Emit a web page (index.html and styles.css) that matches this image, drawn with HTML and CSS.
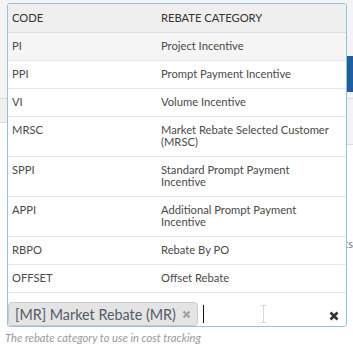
FILE: index.html
```html
<!DOCTYPE html>
<html lang="en">
<head>
    <meta charset="UTF-8">
    <title>Rebate category</title>
    <link rel="stylesheet" href="styles.css">
</head>
<body>
<div class="page">
  <div class="toolbar">
    <span class="action_btn"></span>
  </div>
  <div class="grid_head">
    <div class="gh_left"></div>
    <div class="gh_right"></div>
  </div>
  <p class="page_hint">Rebates and costs</p>
</div>

<div class="field">
  <div class="select_box">
    <div class="results">
      <table class="results_table">
        <thead>
          <tr><th class="col_code">CODE</th><th>REBATE CATEGORY</th></tr>
        </thead>
        <tbody>
          <tr class="highlight"><td>PI</td><td><span class="cat">Project Incentive</span></td></tr>
          <tr><td>PPI</td><td><span class="cat">Prompt Payment Incentive</span></td></tr>
          <tr><td>VI</td><td><span class="cat">Volume Incentive</span></td></tr>
          <tr><td>MRSC</td><td><span class="cat">Market Rebate Selected Customer (MRSC)</span></td></tr>
          <tr><td>SPPI</td><td><span class="cat">Standard Prompt Payment Incentive</span></td></tr>
          <tr><td>APPI</td><td><span class="cat">Additional Prompt Payment Incentive</span></td></tr>
          <tr><td>RBPO</td><td><span class="cat">Rebate By PO</span></td></tr>
          <tr><td>OFFSET</td><td><span class="cat">Offset Rebate</span></td></tr>
          <tr><td>GR</td><td><span class="cat">Growth Rebate</span></td></tr>
          <tr><td>LR</td><td><span class="cat">Loyalty Rebate</span></td></tr>
          <tr><td>PR</td><td><span class="cat">Promotional Rebate</span></td></tr>
          <tr><td>TR</td><td><span class="cat">Target Rebate</span></td></tr>
          <tr><td>QR</td><td><span class="cat">Quarterly Rebate</span></td></tr>
        </tbody>
      </table>
    </div>
    <div class="selection">
      <span class="tag">[MR] Market Rebate (MR)
        <svg class="tag_remove" width="9" height="9" viewBox="0 0 9 9"><path d="M1.5 1.5 L7.5 7.5 M7.5 1.5 L1.5 7.5" stroke="#a3a3a3" stroke-width="2.4"/></svg>
      </span>
      <span class="caret"></span>
      <svg class="ibeam" width="7" height="18" viewBox="0 0 7 18"><path d="M0.5 0.5 H6.5 M3.5 0.5 V17.5 M0.5 17.5 H6.5" stroke="#d8d8d8" fill="none"/></svg>
      <svg class="clear" width="10" height="10" viewBox="0 0 10 10"><path d="M1.5 1.5 L8.5 8.5 M8.5 1.5 L1.5 8.5" stroke="#333" stroke-width="2.6"/></svg>
    </div>
  </div>
  <p class="help">The rebate category to use in cost tracking</p>
</div>
</body>
</html>
```

FILE: styles.css
```css
body, html {
  margin: 0;
}
body {
  font-family: Lato, "Liberation Sans", sans-serif;
  background: #fff;
  width: 353px;
  height: 352px;
  overflow: hidden;
  position: relative;
}
.page {
  width: 100%;
}
.toolbar {
  height: 99px;
  box-sizing: border-box;
  padding-top: 56px;
  background: #f4f4f4;
  border-bottom: 1px solid #dcdcdc;
  display: flex;
  justify-content: flex-end;
}
.action_btn {
  width: 60px;
  height: 36px;
  background: #1d5e9e;
}
.grid_head {
  display: flex;
  align-items: flex-start;
}
.gh_left {
  flex: 1;
  height: 23px;
  background: #f0f0f0;
  border-bottom: 1px solid #dcdcdc;
}
.gh_right {
  flex: 1;
  height: 45px;
  background: #f3f3f3;
  border-bottom: 1px solid #dcdcdc;
}
.page_hint {
  margin: 92px 0 0;
  text-align: right;
  font-size: 11px;
  color: #777;
}
.field {
  position: absolute;
  left: 5px;
  top: 3px;
}
.select_box {
  margin-left: 2px;
  width: 340px;
  box-sizing: border-box;
  border: 1px solid #8fc5dc;
  border-radius: 3px;
  background: #fff;
  overflow: hidden;
}
.results {
  height: 296px;
  overflow-y: scroll;
}
.results::-webkit-scrollbar {
  width: 10px;
}
.results::-webkit-scrollbar-track {
  background: #e4e4e4;
}
.results::-webkit-scrollbar-thumb {
  background: #a9a9a9;
  border-radius: 5px;
}
.results_table {
  width: 100%;
  table-layout: fixed;
  border-collapse: collapse;
  font-size: 11.2px;
  line-height: 12px;
  color: #4a4a4a;
}
.results_table th {
  text-align: left;
  font-weight: normal;
  color: #333;
  background: #efefef;
  padding: 8px 4px;
  border-bottom: 1px solid #dedede;
}
.results_table td {
  padding: 7px 4px 8px;
  border-bottom: 1px solid #e6e6e6;
  vertical-align: top;
}
.col_code {
  width: 141px;
}
.cat {
  display: block;
  max-width: 172px;
}
.highlight td {
  background: #f5f5f5;
}
.selection {
  height: 26px;
  box-sizing: border-box;
  padding-top: 2px;
  display: flex;
  align-items: flex-start;
}
.tag {
  height: 24px;
  box-sizing: border-box;
  display: flex;
  align-items: center;
  gap: 6px;
  padding: 0 6px;
  background: #e4e4e4;
  border: 1px solid #c9c9c9;
  border-radius: 4px;
  font-size: 14.35px;
  color: #535d68;
}
.caret {
  width: 1px;
  height: 18px;
  background: #111;
  margin: 3px 0 0 5px;
}
.ibeam {
  margin: 3px 0 0 56px;
}
.clear {
  margin: 9px 0 0 auto;
  margin-right: 7px;
}
.help {
  margin: 4px 0 0;
  font-size: 11.2px;
  font-style: italic;
  color: #9a9a9a;
}
```
